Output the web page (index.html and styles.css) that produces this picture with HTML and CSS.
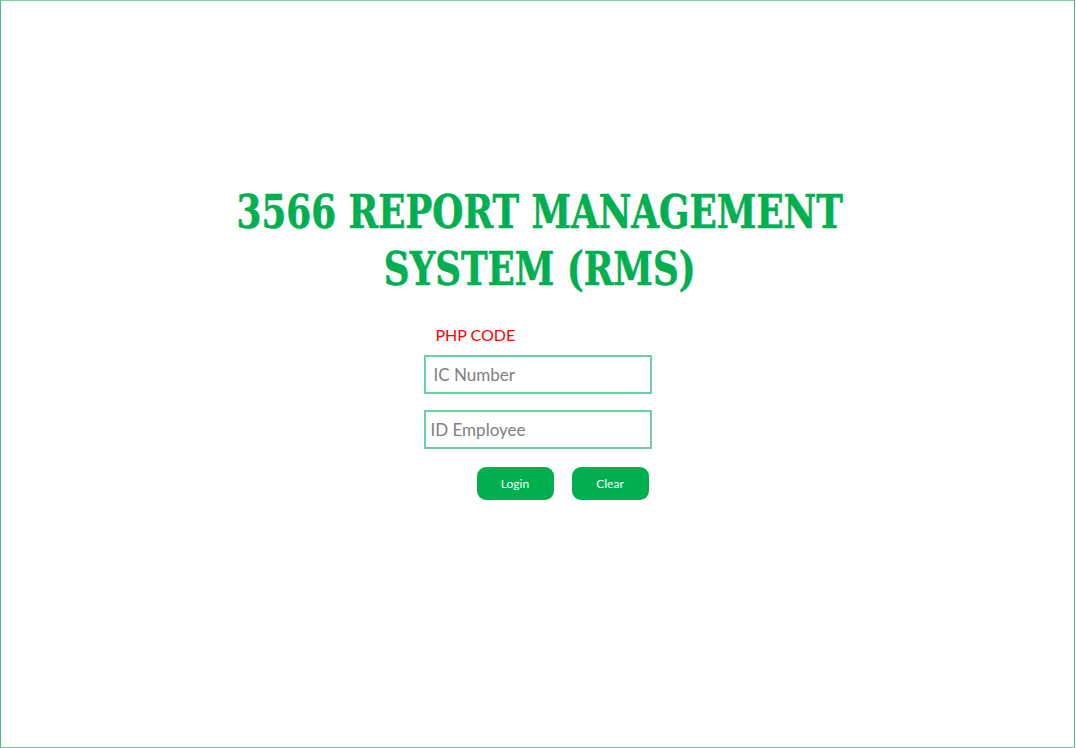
FILE: index.html
```html
<!DOCTYPE html>
<html>
<head>
<meta charset="utf-8">
<title>RMS Login</title>
<link rel="stylesheet" href="styles.css">
</head>
<body>
<div class="frame">
  <h1 class="title">3566 REPORT MANAGEMENT<br>SYSTEM (RMS)</h1>
  <div class="form">
    <div class="php">PHP CODE</div>
    <div class="field"><span class="ph ph-ic">IC Number</span></div>
    <div class="field"><span class="ph ph-id">ID Employee</span></div>
    <div class="buttons">
      <button class="btn">Login</button>
      <button class="btn">Clear</button>
    </div>
  </div>
</div>
</body>
</html>
```
FILE: styles.css
```css
html, body {
  margin: 0;
  padding: 0;
  background: #ffffff;
}
.frame {
  box-sizing: border-box;
  width: 1075px;
  height: 748px;
  border: 1px solid #4cbd88;
  border-top-color: #7cd3a7;
  border-bottom-color: #6dcd9d;
  display: flex;
  flex-direction: column;
  align-items: center;
  padding-top: 182px;
}
.title {
  margin: 0;
  font-family: "DejaVu Serif Condensed", "DejaVu Serif", serif;
  font-weight: bold;
  font-size: 47px;
  line-height: 57px;
  color: #00b050;
  text-align: center;
  transform: translateX(2px) scaleX(0.845);
  -webkit-text-stroke: 0.6px #00b050;
}
.form {
  width: 228px;
  margin-top: 28px;
  display: flex;
  flex-direction: column;
  font-family: "Lato", "Open Sans", sans-serif;
}
.php {
  color: #ff0000;
  font-size: 16px;
  line-height: 20px;
  padding-left: 12px;
  margin-bottom: 10px;
}
.field {
  box-sizing: border-box;
  height: 39px;
  border: 2px solid #6fcfa0;
  display: flex;
  align-items: center;
  margin-bottom: 16px;
}
.ph {
  color: #808080;
  font-size: 17px;
}
.ph-ic { padding-left: 8px; }
.ph-id { padding-left: 5px; }
.buttons {
  display: flex;
  gap: 18px;
  padding-left: 53px;
  margin-top: 2px;
}
.btn {
  width: 77px;
  height: 33px;
  border: none;
  border-radius: 9px;
  background: #00b050;
  color: #ffffff;
  font-family: "Lato", "Open Sans", sans-serif;
  font-size: 12px;
  padding: 0;
}
```
